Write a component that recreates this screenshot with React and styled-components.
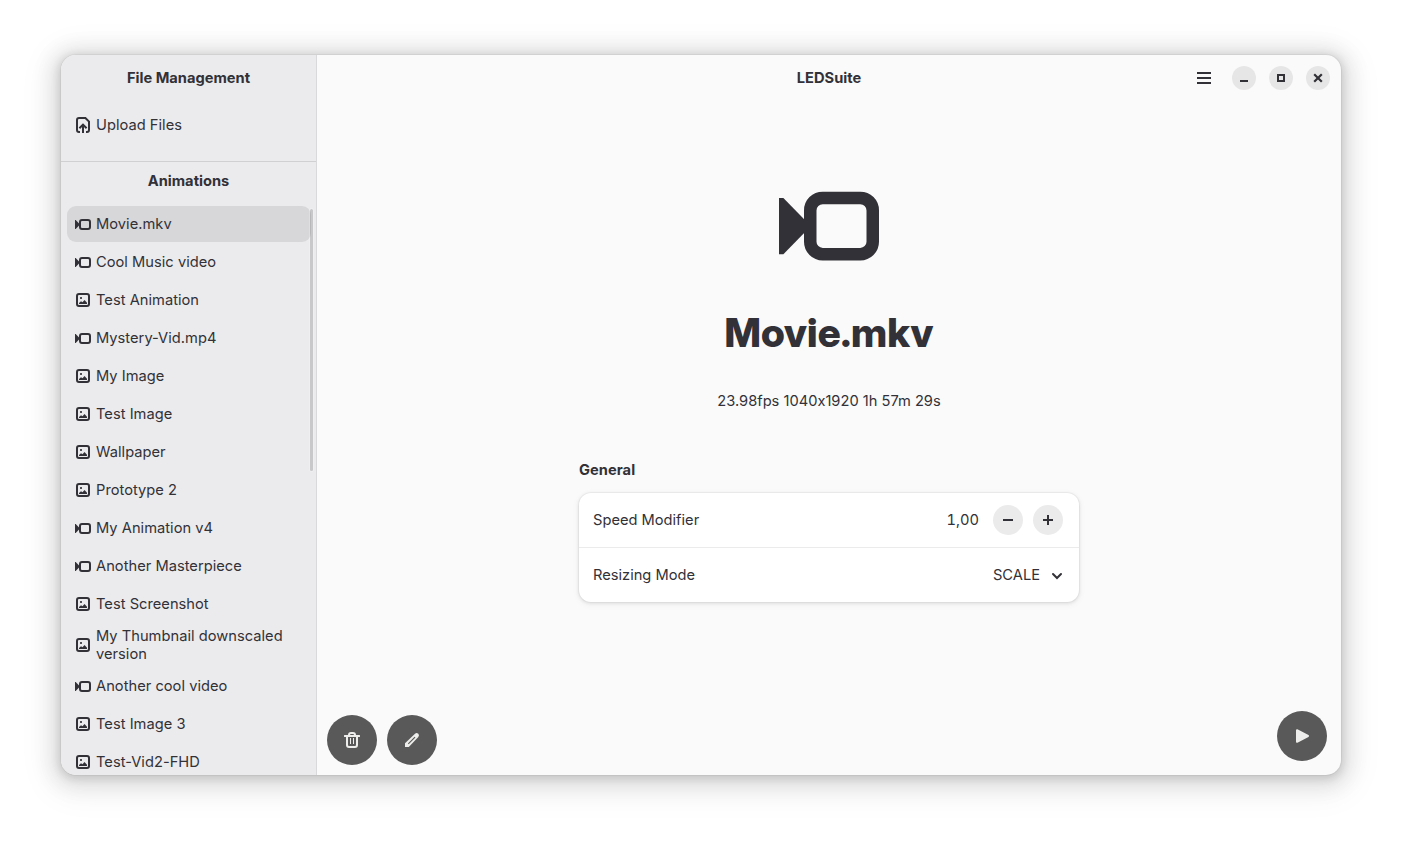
import React from "react";
import styled, { createGlobalStyle } from "styled-components";

const ink = "#323137";

const GlobalStyle = createGlobalStyle`
  *, *::before, *::after { box-sizing: border-box; }
  html, body { margin: 0; background: #fff; overflow: hidden; }
  body {
    font-family: Inter, "Noto Sans", sans-serif;
    font-size: 14.667px;
    line-height: 18px;
    font-feature-settings: "calt" 0;
    color: ${ink};
  }
  button { font: inherit; color: inherit; border: 0; padding: 0; background: none; }
  svg { display: block; flex: none; }
`;

const Desktop = styled.div`
  width: 1402px;
  height: 842px;
  padding: 55px 61px 67px;
  background: #fff;
`;

const AppWindow = styled.div`
  display: flex;
  width: 1280px;
  height: 720px;
  border-radius: 15px;
  overflow: hidden;
  background: #fafafa;
  box-shadow:
    0 0 0 1px rgba(0, 0, 0, 0.04),
    0 2px 8px 2px rgba(0, 0, 0, 0.12),
    0 3px 20px 10px rgba(0, 0, 0, 0.09),
    0 6px 32px 16px rgba(0, 0, 0, 0.045);
`;

const Sidebar = styled.aside`
  display: flex;
  flex-direction: column;
  width: 256px;
  flex: none;
  background: #ebebed;
  border-right: 1px solid #d9d9db;
`;

const SidebarTitle = styled.h2`
  display: flex;
  align-items: center;
  justify-content: center;
  height: ${(p) => p.$height}px;
  flex: none;
  margin: 0;
  font-size: inherit;
  font-weight: 700;
`;

const UploadSection = styled.section`
  height: 107px;
  flex: none;
  border-bottom: 1px solid #d0d0d2;
`;

const UploadList = styled.div`
  padding: 6px 6px 0;
`;

const Scroller = styled.div`
  position: relative;
  flex: 1;
  min-height: 0;
  overflow: hidden;
`;

const List = styled.ul`
  display: flex;
  flex-direction: column;
  gap: 2px;
  margin: 0;
  padding: 6px 5px 0 6px;
  list-style: none;
`;

const Row = styled.li`
  display: flex;
  align-items: center;
  gap: 5px;
  min-height: 36px;
  flex: none;
  padding: 3px 8px;
  border-radius: 9px;
  letter-spacing: 0.025px;
  background: ${(p) => (p.$selected ? "#d7d7d9" : "transparent")};
`;

const ScrollThumb = styled.div`
  position: absolute;
  top: 9px;
  right: 3px;
  width: 3px;
  height: 262px;
  border-radius: 2px;
  background: rgba(0, 0, 6, 0.15);
  box-shadow: 0 0 0 1px rgba(255, 255, 255, 0.2);
`;

const Content = styled.main`
  display: flex;
  flex-direction: column;
  flex: 1;
  min-width: 0;
`;

const HeaderBar = styled.header`
  display: grid;
  grid-template-columns: 1fr auto 1fr;
  align-items: center;
  height: 46px;
  flex: none;
  padding: 0 11px;
`;

const WindowTitle = styled.h1`
  grid-column: 2;
  margin: 0;
  font-size: inherit;
  font-weight: 700;
`;

const HeaderActions = styled.div`
  display: flex;
  justify-content: flex-end;
  align-items: center;
  gap: 13px;
`;

const MenuButton = styled.button`
  display: grid;
  place-items: center;
  width: 34px;
  height: 34px;
  margin-right: -2px;
`;

const RoundButton = styled.button`
  display: grid;
  place-items: center;
  width: ${(p) => p.$size}px;
  height: ${(p) => p.$size}px;
  border-radius: 50%;
  background: ${(p) => (p.$tone === "dark" ? "#595959" : p.$tone === "card" ? "#ebebeb" : "#e6e6e6")};
  color: ${(p) => (p.$tone === "dark" ? "#ededeb" : ink)};
`;

const Page = styled.section`
  display: flex;
  flex-direction: column;
  align-items: center;
  flex: 1;
  min-height: 0;
  padding-top: 75px;
`;

const FileName = styled.h2`
  margin: 33px 0 0;
  font-family: "Inter Display", Inter, sans-serif;
  font-size: 40px;
  line-height: 48px;
  font-weight: 800;
  font-variation-settings: "opsz" 32;
  letter-spacing: 0.15px;
`;

const FileInfo = styled.p`
  margin: 34px 0 0;
  padding-top: 1px;
`;

const Preferences = styled.div`
  width: 500px;
  margin-top: 51px;
`;

const GroupTitle = styled.h3`
  margin: 0 0 14px;
  font-size: inherit;
  font-weight: 700;
  letter-spacing: 0.05px;
`;

const Card = styled.div`
  border-radius: 12px;
  background: #fff;
  box-shadow:
    0 0 0 1px rgba(0, 0, 6, 0.03),
    0 1px 3px 1px rgba(0, 0, 6, 0.07),
    0 2px 6px 2px rgba(0, 0, 6, 0.03);
`;

const SettingRow = styled.div`
  display: flex;
  align-items: center;
  justify-content: space-between;
  height: 54px;
  padding: 0 16px 0 14px;

  & + & {
    height: 55px;
    border-top: 1px solid #ebebec;
  }
`;

const SpinControl = styled.div`
  display: flex;
  align-items: center;
  gap: 10px;
`;

const SpinValue = styled.span`
  margin-right: 4px;
  font-variant-numeric: tabular-nums;
`;

const Dropdown = styled.div`
  display: flex;
  align-items: center;
  gap: 11px;
`;

const ActionBar = styled.footer`
  display: flex;
  align-items: flex-end;
  justify-content: space-between;
  flex: none;
  padding: 0 14px 10px 10px;
`;

const ActionGroup = styled.div`
  display: flex;
  gap: 10px;
  margin-bottom: ${(p) => p.$lift || 0}px;
`;

function VideoIcon({ size = 16 }) {
  const shift = size === 16 ? 0.5 : 0;
  return (
    <svg width={size} height={size} viewBox="0 0 16 16" fill={ink}>
      <g transform={`translate(0 ${shift})`}>
        <path d="M0 3.5H.7L5 7.9V8.1L.7 12.5H0Z" />
        <rect x="5" y="3.5" width="10" height="9" rx="2" fill="none" stroke={ink} strokeWidth="2" />
      </g>
    </svg>
  );
}

function ImageIcon() {
  return (
    <svg width="16" height="16" viewBox="0 0 16 16" fill={ink}>
      <rect x="2" y="2" width="12" height="12" rx="2" fill="none" stroke={ink} strokeWidth="2" />
      <rect x="5" y="5" width="2" height="2" rx="0.8" />
      <path d="M4 12V11L6 9.2L7.5 10.2L9.5 8L12 10.8V12Z" />
    </svg>
  );
}

function UploadIcon() {
  return (
    <svg width="16" height="16" viewBox="0 0 16 16" fill="none" stroke={ink} strokeWidth="2">
      <path d="M5 15H4Q2 15 2 13V3Q2 1 4 1H10.4L14 4.6V13Q14 15 12 15H11" />
      <path d="M8 16V8M4.4 11.2L8 7.6L11.6 11.2" />
    </svg>
  );
}

function MenuIcon() {
  return (
    <svg width="16" height="16" viewBox="0 0 16 16" fill={ink}>
      <path d="M1 2H15V4H1ZM1 7H15V9H1ZM1 12H15V14H1Z" />
    </svg>
  );
}

function ControlIcon({ kind }) {
  return (
    <svg width="16" height="16" viewBox="0 0 16 16" fill="none" stroke="currentColor" strokeWidth="2">
      {kind === "minimize" && <path d="M4 11H12" />}
      {kind === "maximize" && <rect x="5" y="5" width="6" height="6" />}
      {kind === "close" && <path d="M4.2 4.2L11.8 11.8M11.8 4.2L4.2 11.8" strokeWidth="2.2" />}
      {kind === "minus" && <path d="M3 8H13" />}
      {kind === "plus" && <path d="M3 8H13M8 3V13" />}
    </svg>
  );
}

function ChevronIcon() {
  return (
    <svg width="12" height="16" viewBox="0 0 12 16" fill="none" stroke={ink} strokeWidth="2">
      <path d="M2 7L6 11L10 7" strokeLinecap="round" />
    </svg>
  );
}

function TrashIcon() {
  return (
    <svg width="16" height="16" viewBox="0 0 16 16" fill="none" stroke="currentColor">
      <path d="M5 4V3Q5 1 7 1H9Q11 1 11 3V4" strokeWidth="2" />
      <path d="M0.8 4H15.2" strokeWidth="2" strokeLinecap="round" />
      <path d="M3 4V13Q3 15 5 15H11Q13 15 13 13V4" strokeWidth="2" />
      <path d="M6.5 6V12M9.5 6V12" />
    </svg>
  );
}

function PencilIcon() {
  return (
    <svg width="16" height="16" viewBox="0 0 16 16" fill="none">
      <path
        d="M1 15V11.3L11 1.8Q12.6 .4 14.3 1.8Q15.7 3.4 14.3 5L4.8 15Z"
        fill="currentColor"
      />
      <path d="M4.3 11.9L11 5.2" stroke="#595959" strokeWidth="1.2" />
    </svg>
  );
}

function PlayIcon() {
  return (
    <svg width="16" height="16" viewBox="0 0 16 16" fill="currentColor">
      <path
        d="M3 2.2L14 8L3 13.8Z"
        stroke="currentColor"
        strokeWidth="2"
        strokeLinejoin="round"
      />
    </svg>
  );
}

const files = [
  ["Movie.mkv", "video"],
  ["Cool Music video", "video"],
  ["Test Animation", "image"],
  ["Mystery-Vid.mp4", "video"],
  ["My Image", "image"],
  ["Test Image", "image"],
  ["Wallpaper", "image"],
  ["Prototype 2", "image"],
  ["My Animation v4", "video"],
  ["Another Masterpiece", "video"],
  ["Test Screenshot", "image"],
  ["My Thumbnail downscaled version", "image"],
  ["Another cool video", "video"],
  ["Test Image 3", "image"],
  ["Test-Vid2-FHD", "image"],
];

export default function App() {
  return (
    <Desktop>
      <GlobalStyle />
      <AppWindow>
        <Sidebar>
          <UploadSection>
            <SidebarTitle $height={46}>File Management</SidebarTitle>
            <UploadList>
              <Row as="div">
                <UploadIcon />
                <span>Upload Files</span>
              </Row>
            </UploadList>
          </UploadSection>
          <SidebarTitle $height={38}>Animations</SidebarTitle>
          <Scroller>
            <List>
              {files.map(([name, kind], i) => (
                <Row key={name} $selected={i === 0}>
                  {kind === "video" ? <VideoIcon /> : <ImageIcon />}
                  <span>{name}</span>
                </Row>
              ))}
            </List>
            <ScrollThumb />
          </Scroller>
        </Sidebar>
        <Content>
          <HeaderBar>
            <WindowTitle>LEDSuite</WindowTitle>
            <HeaderActions>
              <MenuButton aria-label="Main menu">
                <MenuIcon />
              </MenuButton>
              {["minimize", "maximize", "close"].map((kind) => (
                <RoundButton key={kind} $size={24} aria-label={kind}>
                  <ControlIcon kind={kind} />
                </RoundButton>
              ))}
            </HeaderActions>
          </HeaderBar>
          <Page>
            <VideoIcon size={100} />
            <FileName>Movie.mkv</FileName>
            <FileInfo>23.98fps 1040x1920 1h 57m 29s</FileInfo>
            <Preferences>
              <GroupTitle>General</GroupTitle>
              <Card>
                <SettingRow>
                  <span>Speed Modifier</span>
                  <SpinControl>
                    <SpinValue>1,00</SpinValue>
                    <RoundButton $size={30} $tone="card" aria-label="Decrease">
                      <ControlIcon kind="minus" />
                    </RoundButton>
                    <RoundButton $size={30} $tone="card" aria-label="Increase">
                      <ControlIcon kind="plus" />
                    </RoundButton>
                  </SpinControl>
                </SettingRow>
                <SettingRow>
                  <span>Resizing Mode</span>
                  <Dropdown>
                    <span>SCALE</span>
                    <ChevronIcon />
                  </Dropdown>
                </SettingRow>
              </Card>
            </Preferences>
          </Page>
          <ActionBar>
            <ActionGroup>
              <RoundButton $size={50} $tone="dark" aria-label="Delete">
                <TrashIcon />
              </RoundButton>
              <RoundButton $size={50} $tone="dark" aria-label="Edit">
                <PencilIcon />
              </RoundButton>
            </ActionGroup>
            <ActionGroup $lift={4}>
              <RoundButton $size={50} $tone="dark" aria-label="Play">
                <PlayIcon />
              </RoundButton>
            </ActionGroup>
          </ActionBar>
        </Content>
      </AppWindow>
    </Desktop>
  );
}
